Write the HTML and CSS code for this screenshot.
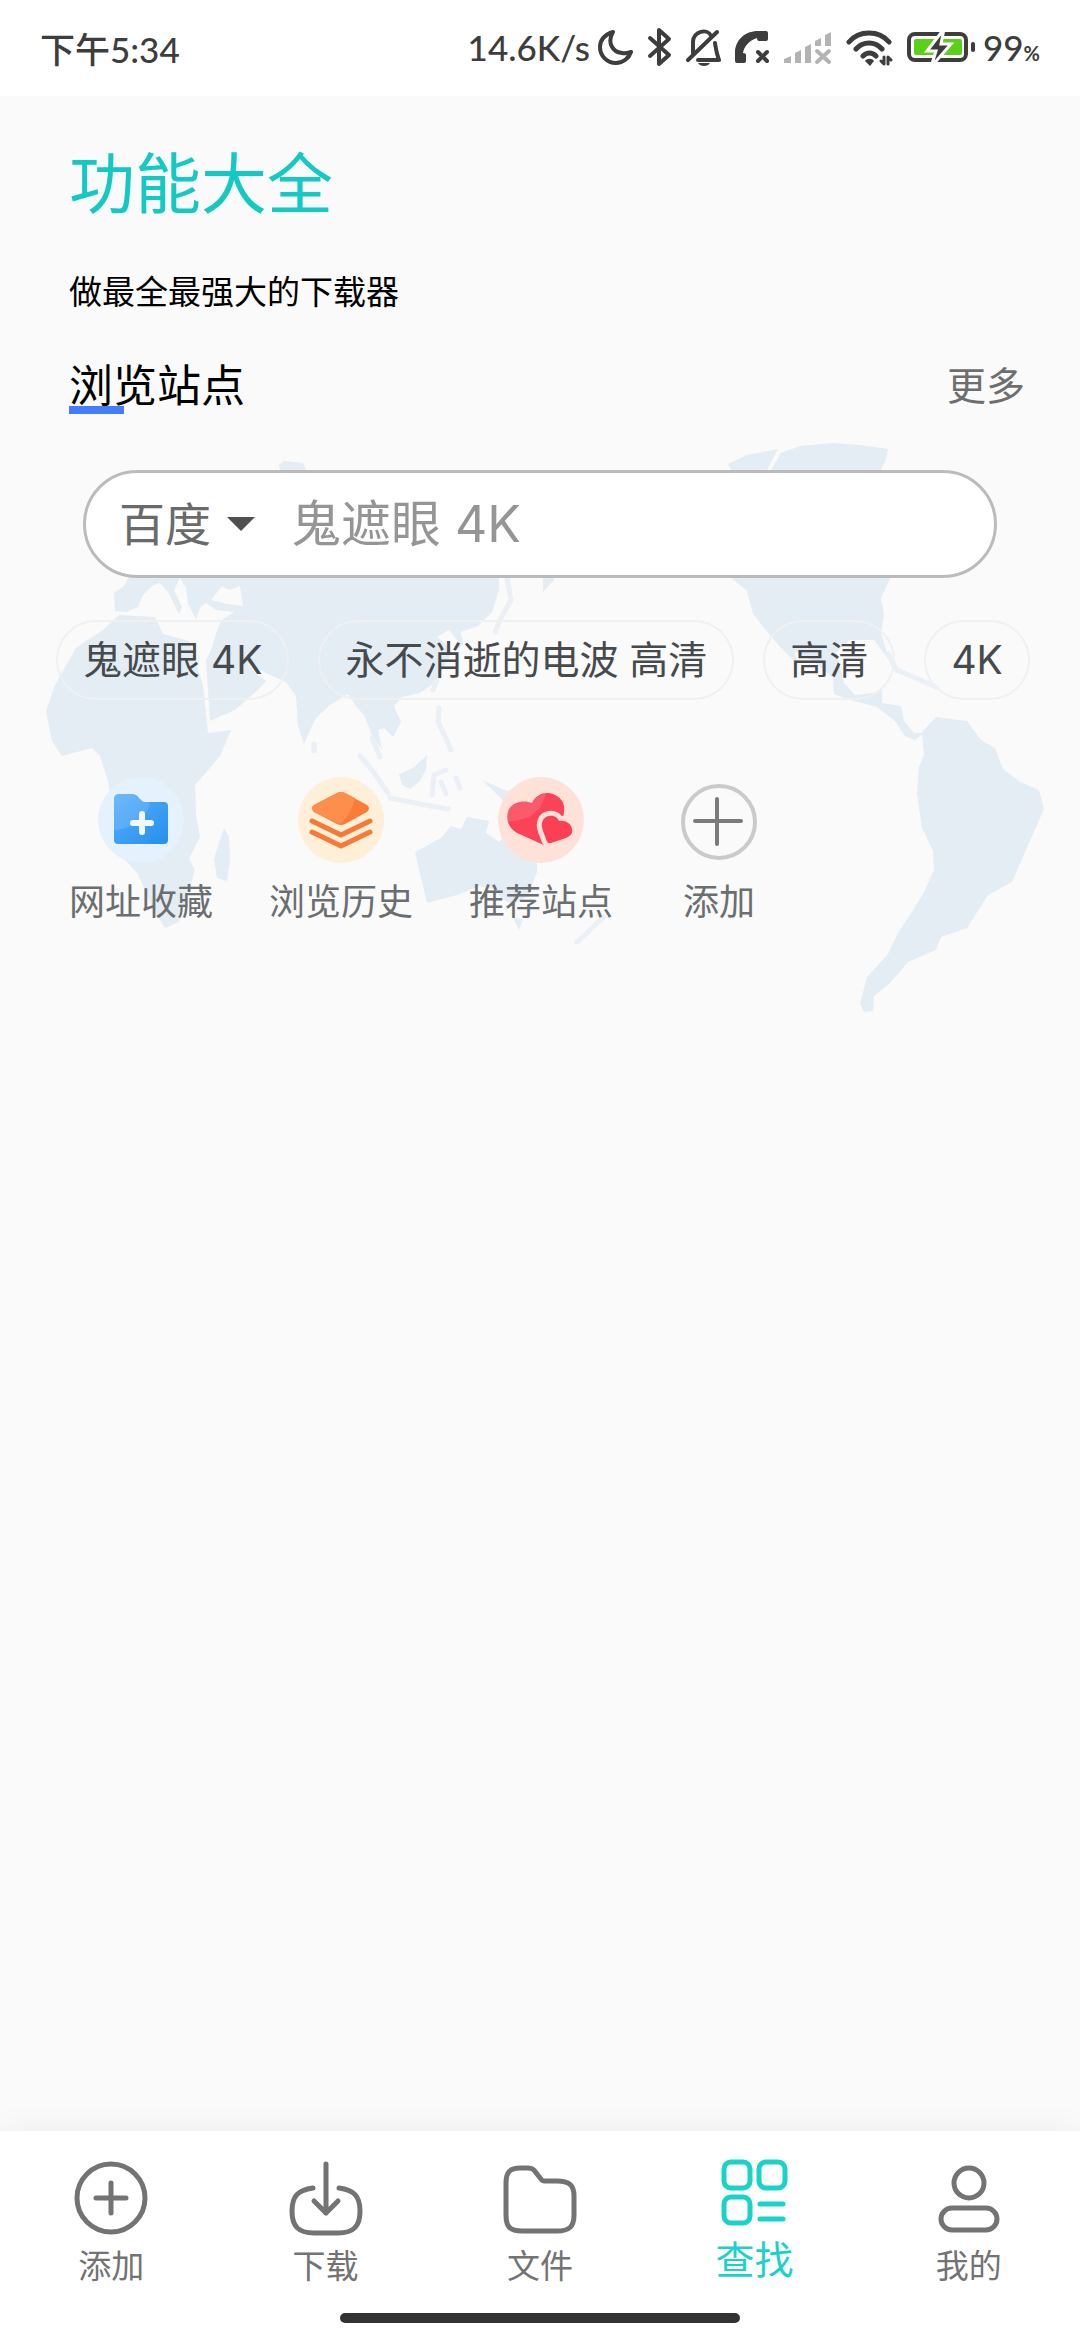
FILE: index.html
```html
<!DOCTYPE html>
<html lang="zh-CN">
<head>
    <meta charset="UTF-8">
    <meta name="viewport" content="width=device-width, initial-scale=1.0">
    <title>功能大全</title>
    <link rel="stylesheet" href="styles.css">
</head>
<body>
    <header class="status-bar">
        <span class="time">下午5:34</span>
        <div class="status-right">
            <span>14.6K/s</span>
            <div class="status-icons">
                <svg width="35" height="40" viewBox="0 0 35 40" class="line">
                    <path d="M15 5C7 7 2 13 2 20c0 9 7 16 16 16 7 0 13-5 15-11-3 1-6 2-9 1C14 25 9 15 15 5z"/>
                </svg>
                <svg width="25" height="40" viewBox="0 0 25 40" class="line">
                    <path d="M3 11l19 17-10 9V3l10 9L3 29"/>
                </svg>
                <svg width="35" height="40" viewBox="0 0 35 40" class="line">
                    <path d="M31 5L2 33M7 26V15C7 4 22 1 25 9M29 16c1 6 1 9 4 17H12"/>
                    <path class="solid" d="M12 36h12c-2 4-10 4-12 0z"/>
                </svg>
                <svg width="35" height="40" viewBox="0 0 35 40">
                    <path class="solid" d="M0 34V26C0 13 10 4 23 4h8q2 0 2 2v6q0 2-2 2h-7q-2 0-2-3C15 13 9 19 8 26q3 0 3 2v6q0 2-2 2H2q-2 0-2-2z"/>
                    <path class="line" d="M23 25l9 9M32 25L23 34"/>
                </svg>
                <svg width="48" height="40" viewBox="0 0 48 40">
                    <path class="signal" d="M0 36v-4l7-3v7zM11 36V26l6-3v13zM21 36V20l6-3v19zM31 19v-5l6-3v8zM41 19V8l6-3v14z"/>
                    <path class="signal-off" d="M33 24l12 11M45 24L33 35"/>
                </svg>
                <svg width="47" height="40" viewBox="0 0 47 40" class="line">
                    <path class="arc" d="M3 15C13 3 33 3 43 15M10 22c7-8 19-8 26 0M17 29c4-4 9-4 13 0"/>
                    <path class="solid" d="M19 34c2-3 7-3 9 0l-4 5z"/>
                    <path class="thin" d="M38 30v7l-3-3M42 37v-7l3 3"/>
                </svg>
                <svg width="68" height="40" viewBox="0 0 68 40">
                    <rect x="2" y="7" width="57" height="26" rx="6" fill="none" stroke="#3d3d3d" stroke-width="4"/>
                    <rect x="7" y="12" width="48" height="16" rx="2" fill="#5bd01b"/>
                    <path d="M37 2L20 24h9l-5 16L44 17H34z" fill="#3d3d3d" stroke="#fff" stroke-width="3"/>
                    <rect x="64" y="15" width="4" height="10" rx="2" fill="#3d3d3d"/>
                </svg>
            </div>
            <span class="battery">99<small>%</small></span>
        </div>
    </header>

    <main class="content">
        <h1>功能大全</h1>
        <p class="subtitle">做最全最强大的下载器</p>

        <div class="section-head">
            <h2>浏览站点</h2>
            <a href="#" class="more">更多</a>
        </div>

        <section class="browse">
            <!-- World map behind the search area -->
            <svg class="map" viewBox="0 430 1080 600" aria-hidden="true">
                <!-- Europe and Asia -->
                <path d="M133 570L124 586L114 593L115 611L126 612L138 607L143 595L152 586L160 583L168 592L179 614L182 607L174 590L180 578L186 588L188 604L196 619L200 608L206 603L216 610L234 612L222 620L218 628L211 650L206 660L208 690L210 721L235 710L260 688L266 681L256 674L247 663L270 675L286 682L296 696L298 726L304 744L310 730L316 718L330 705L348 694L356 706L364 715L372 735L382 750L378 730L384 728L393 737L401 722L394 706L402 697L420 693L436 682L450 656L446 644L437 637L449 630L458 641L456 651L463 645L461 632L478 626L492 612L499 590V570Z"/>
                <path class="sea" d="M211 600L222 586L229 590L240 586L243 606L228 604Z"/>
                <!-- Africa -->
                <path d="M119 615L155 617L163 634L189 641L203 685L208 733L231 730L220 756L195 785L196 815L200 837L189 859L195 870L186 900L179 922L165 928L152 907L138 874L114 848L113 812L108 781L100 756L92 748L62 756L52 741L46 711L55 685L76 648L103 630Z"/>
                <path d="M224 828L229 837L230 860L227 881L217 878L214 859L219 843Z"/>
                <!-- Islands of south-east Asia -->
                <path d="M399 774L413 768L427 755L426 770L420 781L410 789L402 785Z"/>
                <path class="isle" d="M360 756L372 770L388 793M372 738L380 757M390 798L420 804L448 809M439 708L438 722L447 740L451 750M432 795L434 775L446 770M441 782L446 794M456 778L460 788M433 690L437 680M314 744V751"/>
                <path class="isle" d="M507 578L511 600L500 620L495 632"/>
                <path d="M482 780L500 788L525 798L540 812L520 812L503 800Z"/>
                <path d="M543 570H556L554 580L543 592Z"/>
                <path d="M279 465L284 461L303 463L306 470H280Z"/>
                <!-- Australia and New Zealand -->
                <path d="M415 852L441 838L451 826L461 829L467 817L489 821L486 833L499 842L507 833L512 815L520 830L537 860L537 872L528 896L514 904L503 900L494 889L479 886L457 895L427 903Z"/>
                <path d="M513 918L523 919L519 930Z"/>
                <path class="isle" d="M604 917L594 926M591 929L577 942"/>
                <!-- North America -->
                <path d="M728 464L747 455L778 449L767 470L767 478H735Z"/>
                <path d="M771 470L781 453L800 446L833 443L860 445L888 449L886 459L876 480H771Z"/>
                <path d="M722 570L747 591L753 614L774 640L783 650L799 666L794 651L813 661L833 678L834 694L850 700L877 707L895 721L905 736L915 740L924 733L914 733L904 721L901 706L882 703L882 690L872 693L855 695L844 683L840 667L836 652L850 640L874 640L886 656L889 660L881 633L884 614L881 598L894 570Z"/>
                <path class="isle" d="M888 654L897 671M897 670L920 680L936 687"/>
                <!-- South America -->
                <path d="M922 732L936 717L967 721L981 740L995 748L1003 769L1020 782L1039 790L1044 809L1029 843L1012 882L988 895L967 928L941 937L936 950L908 962L890 983L874 996L873 1011L864 1012L860 1004L867 977L888 954L898 933L912 912L924 892L934 870L933 851L922 828L917 794L919 767L924 755Z"/>
            </svg>

            <form class="search">
                <select class="engine" aria-label="搜索引擎">
                    <option>百度</option>
                </select>
                <svg class="caret" width="28" height="14" viewBox="0 0 28 14"><path d="M0 0h28L14 14z"/></svg>
                <input type="text" class="search-input" aria-label="搜索" placeholder="鬼遮眼 4K">
            </form>

            <div class="chips">
                <button class="chip">鬼遮眼 4K</button>
                <button class="chip">永不消逝的电波 高清</button>
                <button class="chip">高清</button>
                <button class="chip">4K</button>
            </div>

            <div class="sites">
                <button class="site">
                    <svg width="88" height="88" viewBox="0 0 88 88">
                        <defs>
                            <linearGradient id="blue" x1="0" y1="0" x2="1" y2="1">
                                <stop offset="0" stop-color="#5aaefb"/>
                                <stop offset="1" stop-color="#2590ec"/>
                            </linearGradient>
                        </defs>
                        <circle cx="44" cy="44" r="43" fill="#e5f2fe"/>
                        <path d="M22 18H35c3 0 5 1 7 4l2 2c1 1 2 2 4 2H67c3 0 4 2 4 4V64c0 3-2 4-4 4H21c-3 0-4-2-4-4V23c0-3 2-5 5-5z" fill="url(#blue)"/>
                        <path d="M17 54C36 53 50 42 53 26H45L40 19 35 18H22c-3 0-5 2-5 5z" fill="#fff" opacity="0.12"/>
                        <path d="M45 38v18M36 47h18" stroke="#f1f9ff" stroke-width="6" stroke-linecap="round"/>
                    </svg>
                    网址收藏
                </button>
                <button class="site">
                    <svg width="88" height="88" viewBox="0 0 88 88">
                        <circle cx="44" cy="44" r="43" fill="#feefd9"/>
                        <path d="M40 17q4-2 8 0L70 29q4 3 0 7L48 48q-4 2-8 0L17 36q-4-4 0-7z" fill="#fb7d35"/>
                        <path d="M40 17q4-2 8 0L58 22Q55 38 43 48L17 36q-4-4 0-7z" fill="#fd8e4b"/>
                        <path d="M15 45L44 59 73 45M15 56L44 70 73 56" fill="none" stroke="#f97835" stroke-width="5" stroke-linecap="round" stroke-linejoin="round"/>
                    </svg>
                    浏览历史
                </button>
                <button class="site">
                    <svg width="88" height="88" viewBox="0 0 88 88">
                        <circle cx="44" cy="44" r="43" fill="#fee2da"/>
                        <path d="M49 70L20 57C11 52 8 42 12 33 17 25 28 24 35 27 40 17 50 15 58 19 67 23 69 32 66 41L56 56z" fill="#fb4358"/>
                        <path d="M10 46C32 43 43 39 49 17 42 19 38 22 35 27 28 24 17 25 12 33 10 37 9 41 10 46z" fill="#fff" opacity="0.12"/>
                        <path class="small-heart" d="M54 67C51 68 50 66 49 63L46 55C43 47 46 41 52 40 57 39 61 42 62 45 68 44 74 47 75 53 76 58 73 60 69 62z"/>
                    </svg>
                    推荐站点
                </button>
                <button class="site">
                    <svg width="88" height="88" viewBox="0 0 88 88" fill="none">
                        <circle cx="44" cy="46" r="36" stroke="#cacaca" stroke-width="4"/>
                        <path d="M42 23v45M20 45h46" stroke="#7b7b7b" stroke-width="4" stroke-linecap="round"/>
                    </svg>
                    添加
                </button>
            </div>
        </section>
    </main>

    <nav class="tab-bar">
        <div class="tabs">
            <a href="#" class="tab">
                <svg width="80" height="80" viewBox="0 0 80 80">
                    <circle cx="40" cy="40" r="34"/>
                    <path d="M40 25v30M25 40h30"/>
                </svg>
                添加
            </a>
            <a href="#" class="tab">
                <svg width="80" height="80" viewBox="0 0 80 80">
                    <path d="M27 30C12 32 6 38 6 53C6 68 12 75 28 75H52C68 75 74 68 74 53C74 38 68 32 53 30"/>
                    <path d="M40 6V55M28 43L40 55 52 43"/>
                </svg>
                下载
            </a>
            <a href="#" class="tab">
                <svg width="80" height="80" viewBox="0 0 80 80">
                    <path d="M20 10H28C33 10 34 12 37 16L41 21Q42 23 45 23H57C69 23 74 27 74 38V57C74 69 69 73 57 73H22C10 73 6 69 6 57V25C6 14 10 10 20 10Z"/>
                </svg>
                文件
            </a>
            <a href="#" class="tab active">
                <svg width="80" height="80" viewBox="0 0 80 80">
                    <rect x="10" y="4" width="26" height="26" rx="7"/>
                    <rect x="45" y="4" width="26" height="26" rx="7"/>
                    <rect x="10" y="39" width="26" height="26" rx="7"/>
                    <path d="M46 46H69M46 61H69"/>
                </svg>
                查找
            </a>
            <a href="#" class="tab">
                <svg width="80" height="80" viewBox="0 0 80 80">
                    <circle cx="40" cy="25" r="15"/>
                    <rect x="12" y="50" width="56" height="22" rx="11"/>
                </svg>
                我的
            </a>
        </div>
        <div class="home-bar"></div>
    </nav>
</body>
</html>
```

FILE: styles.css
```css
* {
    box-sizing: border-box;
}
body {
    margin: 0;
    min-height: 100vh;
    display: flex;
    flex-direction: column;
    font-family: Inter, "Noto Sans CJK SC", sans-serif;
    background-color: #fafafa;
    color: #000;
}
button, select, input {
    font-family: inherit;
    background: none;
    border: none;
    margin: 0;
    padding: 0;
}
a {
    text-decoration: none;
}

/* Status bar */
.status-bar {
    display: flex;
    justify-content: space-between;
    align-items: center;
    height: 96px;
    padding: 0 40px 2px;
    background-color: #fff;
    color: #3d3d3d;
    font-family: Lato, "Noto Sans CJK SC", sans-serif;
    font-size: 35px;
    font-weight: 500;
}
.status-right {
    display: flex;
    align-items: center;
    gap: 8px;
}
.status-icons {
    display: flex;
    align-items: center;
    gap: 14px;
}
.battery small {
    font-size: 20px;
    font-weight: 700;
}
.line {
    fill: none;
    stroke: #3d3d3d;
    stroke-width: 4;
    stroke-linecap: round;
    stroke-linejoin: round;
}
.arc {
    stroke-width: 5;
}
.thin {
    stroke-width: 3;
}
.solid {
    fill: #3d3d3d;
    stroke: none;
}
.signal {
    fill: #b3b3b3;
}
.signal-off {
    fill: none;
    stroke: #b3b3b3;
    stroke-width: 4;
    stroke-linecap: round;
}

/* Main content */
.content {
    flex: 1;
    padding-top: 48px;
}
h1 {
    margin: 0;
    padding: 0 69px;
    font-size: 66px;
    line-height: 80px;
    font-weight: 400;
    color: #12c9c4;
}
.subtitle {
    margin: 48px 0 0;
    padding: 0 69px;
    font-size: 33px;
    line-height: 40px;
}
.section-head {
    display: flex;
    justify-content: space-between;
    align-items: center;
    margin-top: 46px;
    padding: 0 55px 0 69px;
}
h2 {
    position: relative;
    margin: 0;
    font-size: 44px;
    line-height: 56px;
    font-weight: 400;
}
h2::after {
    content: "";
    position: absolute;
    left: 0;
    bottom: 0;
    width: 55px;
    height: 8px;
    background-color: #437dfb;
}
.more {
    font-size: 39px;
    line-height: 56px;
    color: #6e6e6e;
}

/* Search, chips and site shortcuts over the map */
.browse {
    position: relative;
    padding-top: 56px;
}
.map {
    position: absolute;
    top: 16px;
    left: 0;
    width: 100%;
    fill: #e4ecf4;
}
.sea {
    fill: #fafafa;
}
.isle {
    fill: none;
    stroke: #eaf0f6;
    stroke-width: 5;
    stroke-linecap: round;
    stroke-linejoin: round;
}
.search {
    position: relative;
    display: flex;
    align-items: center;
    height: 108px;
    margin: 0 83px;
    padding: 0 33px;
    background-color: #fff;
    border: 3px solid #bbb;
    border-radius: 54px;
}
.engine {
    appearance: none;
    width: 94px;
    font-size: 46px;
    line-height: 60px;
    color: #6a6a6a;
}
.caret {
    margin: 0 36px 0 14px;
    fill: #4f4f4f;
}
.search-input {
    flex: 1;
    min-width: 0;
    font-size: 50px;
    line-height: 60px;
}
.search-input::placeholder {
    color: #959595;
    opacity: 1;
}
.chips {
    position: relative;
    display: flex;
    gap: 29px;
    margin-top: 42px;
    padding-left: 56px;
    overflow: hidden;
}
.chip {
    flex: none;
    height: 80px;
    padding: 0 25px;
    border: 2px solid #eff0f2;
    border-radius: 40px;
    font-size: 39px;
    line-height: 56px;
    color: #464a4d;
}
.sites {
    position: relative;
    display: flex;
    margin-top: 76px;
    padding: 0 41px;
}
.site {
    display: flex;
    flex-direction: column;
    align-items: center;
    gap: 12px;
    min-width: 156px;
    padding: 0 28px;
    font-size: 36px;
    line-height: 52px;
    color: #6b6e70;
}
.small-heart {
    fill: #fb4053;
    stroke: #fee2da;
    stroke-width: 10;
    stroke-linejoin: round;
    paint-order: stroke;
}

/* Bottom tab bar */
.tab-bar {
    padding-top: 27px;
    background-color: #fff;
    box-shadow: 0 0 30px rgba(0, 0, 0, 0.06);
}
.tabs {
    display: flex;
    padding: 0 4px;
}
.tab {
    flex: 1;
    display: flex;
    flex-direction: column;
    align-items: center;
    gap: 6px;
    font-size: 33px;
    line-height: 44px;
    color: #737373;
}
.tab svg {
    fill: none;
    stroke: currentColor;
    stroke-width: 5;
    stroke-linecap: round;
    stroke-linejoin: round;
}
.tab.active {
    gap: 0;
    font-size: 39px;
    color: #19d3c9;
}
.home-bar {
    width: 37%;
    height: 10px;
    margin: 25px auto 17px;
    border-radius: 5px;
    background-color: #333;
}
```
